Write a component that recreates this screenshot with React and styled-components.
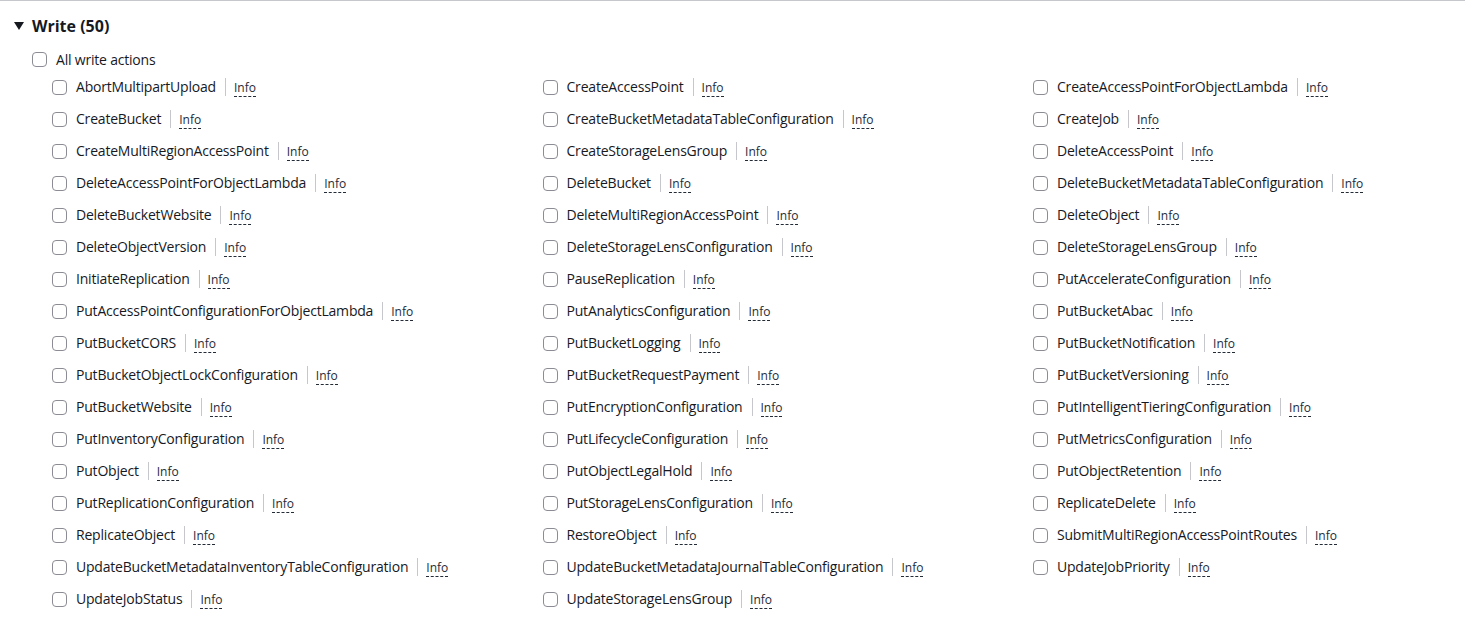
import styled, { createGlobalStyle } from 'styled-components'

const GlobalStyle = createGlobalStyle`
  body {
    margin: 0;
    background: #ffffff;
    font-family: "Open Sans", "Noto Sans", Arial, sans-serif;
    color: #16191f;
    overflow: hidden;
  }
`

const actions = [
  'AbortMultipartUpload', 'CreateAccessPoint', 'CreateAccessPointForObjectLambda',
  'CreateBucket', 'CreateBucketMetadataTableConfiguration', 'CreateJob',
  'CreateMultiRegionAccessPoint', 'CreateStorageLensGroup', 'DeleteAccessPoint',
  'DeleteAccessPointForObjectLambda', 'DeleteBucket', 'DeleteBucketMetadataTableConfiguration',
  'DeleteBucketWebsite', 'DeleteMultiRegionAccessPoint', 'DeleteObject',
  'DeleteObjectVersion', 'DeleteStorageLensConfiguration', 'DeleteStorageLensGroup',
  'InitiateReplication', 'PauseReplication', 'PutAccelerateConfiguration',
  'PutAccessPointConfigurationForObjectLambda', 'PutAnalyticsConfiguration', 'PutBucketAbac',
  'PutBucketCORS', 'PutBucketLogging', 'PutBucketNotification',
  'PutBucketObjectLockConfiguration', 'PutBucketRequestPayment', 'PutBucketVersioning',
  'PutBucketWebsite', 'PutEncryptionConfiguration', 'PutIntelligentTieringConfiguration',
  'PutInventoryConfiguration', 'PutLifecycleConfiguration', 'PutMetricsConfiguration',
  'PutObject', 'PutObjectLegalHold', 'PutObjectRetention',
  'PutReplicationConfiguration', 'PutStorageLensConfiguration', 'ReplicateDelete',
  'ReplicateObject', 'RestoreObject', 'SubmitMultiRegionAccessPointRoutes',
  'UpdateBucketMetadataInventoryTableConfiguration', 'UpdateBucketMetadataJournalTableConfiguration', 'UpdateJobPriority',
  'UpdateJobStatus', 'UpdateStorageLensGroup',
]

const Page = styled.div`
  border-top: 1px solid #c6c6cd;
  padding-top: 15px;
  width: 1465px;
  height: 623px;
  overflow: hidden;
`

const Heading = styled.div`
  display: flex;
  align-items: center;
  gap: 8px;
  height: 20px;
  padding-left: 14px;
  font-size: 16px;
  font-weight: 700;
  line-height: 20px;
`

const Caret = styled.span`
  width: 0;
  height: 0;
  border-left: 5px solid transparent;
  border-right: 5px solid transparent;
  border-top: 8px solid #16191f;
`

const AllRow = styled.label`
  display: flex;
  align-items: center;
  height: 24px;
  margin-top: 11px;
  padding-left: 32px;
  font-size: 14px;
  letter-spacing: -0.2px;
`

const Grid = styled.div`
  display: grid;
  grid-template-columns: repeat(3, 490.5px);
  grid-auto-rows: 32px;
  padding-left: 52px;
`

const Item = styled.div`
  display: flex;
  align-items: center;
  font-size: 14px;
  line-height: 20px;
  letter-spacing: -0.2px;
  white-space: nowrap;
`

const Box = styled.span`
  flex: none;
  box-sizing: border-box;
  width: 15px;
  height: 15px;
  border: 1.5px solid #8c8c94;
  border-radius: 4px;
  background: #fff;
  margin-right: 9px;
`

const Divider = styled.span`
  width: 1px;
  height: 18px;
  background: #c6c6cd;
  margin: 0 8px 0 9px;
`

const Info = styled.span`
  font-size: 12px;
  line-height: 16px;
  letter-spacing: 0;
  margin-top: 3px;
  color: #232b37;
  border-bottom: 1px dashed #232b37;
`

export default function App() {
  return (
    <>
      <GlobalStyle />
      <Page>
        <Heading>
          <Caret />
          Write (50)
        </Heading>
        <AllRow>
          <Box />
          All write actions
        </AllRow>
        <Grid>
          {actions.map((name) => (
            <Item key={name}>
              <Box />
              {name}
              <Divider />
              <Info>Info</Info>
            </Item>
          ))}
        </Grid>
      </Page>
    </>
  )
}
